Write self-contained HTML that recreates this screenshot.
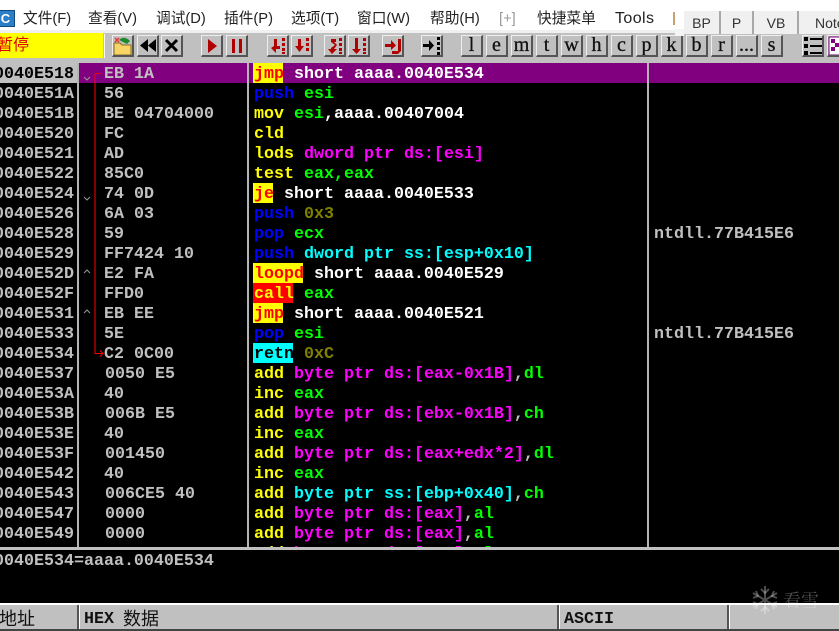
<!DOCTYPE html>
<html><head><meta charset="utf-8"><style>
*{margin:0;padding:0;box-sizing:border-box}
html,body{width:839px;height:631px;overflow:hidden;background:#fff}
#w{position:relative;width:839px;height:631px;overflow:hidden;background:#fff;font-family:"Liberation Sans","Noto Sans CJK SC",sans-serif}
.m{position:absolute;top:9px;font-size:14.7px;line-height:20px;color:#222;white-space:pre}
.tb{position:absolute;left:0;top:30px;width:839px;height:33px;background:#c0c0c0;border-top:3px solid #f0f0f0}
.btn{position:absolute;top:35px;width:22px;height:22px;background:#c0c0c0;border-top:1px solid #eee;border-left:1px solid #eee;border-right:2px solid #555;border-bottom:2px solid #555;font-family:"Liberation Serif",serif;font-size:20px;line-height:19px;text-align:center;color:#111;-webkit-text-stroke:.3px #111;overflow:hidden}
.btn svg{position:absolute;left:0;top:0}
#g{position:absolute;left:0;top:63px;width:839px;height:484px;background:#000;overflow:hidden;font-family:"Liberation Mono",monospace;font-weight:bold;font-size:16.67px;line-height:20px}
.col{position:absolute;top:2px;white-space:normal}
.col div{height:20px;white-space:pre}
.y{color:#ff0}.l{color:#0f0}.w{color:#fff}.u{color:#00f}.o{color:#808000}.p{color:#f0f}.c{color:#0ff}.s{color:#c0c0c0}
.hb{position:absolute;height:20px;left:253px}
.v{position:absolute;background:#b4b4b4;width:2px;top:63px;height:484px}
.f{font-family:"Liberation Mono",monospace;font-weight:bold;font-size:16.67px;line-height:20px;white-space:pre;position:absolute}
.tab{position:absolute;top:11px;height:23px;background:#f0f0f0;border-right:2px solid #a8a8a8;font-size:14px;line-height:24px;text-align:center;color:#333;overflow:hidden;white-space:pre}
</style></head><body><div id="w">
<div style="position:absolute;left:-4px;top:10px;width:19px;height:17px;background:#2a7fc8;border:1px solid #124a80;color:#fff;font:bold 13px/15px 'Liberation Sans';text-align:center">C</div>
<div class="m" style="left:23px">文件(F)</div><div class="m" style="left:88px">查看(V)</div><div class="m" style="left:156px">调试(D)</div><div class="m" style="left:224px">插件(P)</div><div class="m" style="left:291px">选项(T)</div><div class="m" style="left:357px">窗口(W)</div><div class="m" style="left:430px">帮助(H)</div><div class="m" style="left:499px;color:#999">[+]</div><div class="m" style="left:537px">快捷菜单</div><div class="m" style="left:615px;font-size:16px;letter-spacing:.4px">Tools</div>
<div style="position:absolute;left:673px;top:12px;width:2px;height:13px;background:#c9a070"></div>

<div class="tb"></div>
<div style="position:absolute;left:0;top:33px;width:103px;height:25px;background:#ff0;color:#e00000;font-size:16px;line-height:26px;white-space:pre;overflow:hidden"><span style="margin-left:-3px;display:inline-block">暂停</span></div>
<div style="position:absolute;left:104px;top:34px;width:1px;height:24px;background:#fff"></div>

<div class="btn" style="left:112px"><svg width="20" height="20"><path d="M1 7h6l2 2h9v10H1z" fill="#f5d565" stroke="#8a6a20"/><path d="M2 2l4 4M6 2L2 6" stroke="#e33" stroke-width="1.500"/><path d="M6 4q5-5 11 1l-3 3-4-2z" fill="#1a8a2a"/></svg></div>
<div class="btn" style="left:137px"><svg width="20" height="20"><path d="M10 3v13L2 9.500zM18 3v13L10 9.500z" fill="#000"/></svg></div>
<div class="btn" style="left:161px"><svg width="20" height="20"><path d="M4 4l11 11M15 4L4 15" stroke="#000" stroke-width="3"/></svg></div>
<div class="btn" style="left:201px"><svg width="20" height="20"><path d="M6 3v14l9-7z" fill="#b00000"/></svg></div>
<div class="btn" style="left:226px"><svg width="20" height="20"><path d="M5 3h3v14H5zM12 3h3v14h-3z" fill="#b00000"/></svg></div>
<div class="btn" style="left:267px"><svg width="20" height="20"><path d="M6 3h3v7h3v3H8v4l-5-5 3-2z" fill="#b00000"/><path d="M14 2h3v3h-3zM14 7h3v3h-3zM14 12h3v3h-3zM14 16h3v2h-3z" fill="#b00000"/></svg></div>
<div class="btn" style="left:291px"><svg width="20" height="20"><path d="M6 3h3v7h3l-4.500 6L3 10h3z" fill="#b00000"/><path d="M14 2h3v3h-3zM14 7h3v3h-3zM14 12h3v3h-3z" fill="#b00000"/></svg></div>
<div class="btn" style="left:324px"><svg width="20" height="20"><path d="M11 3H6v3l4 3-4 3v1H3l4 5 5-5H9l3-4-3-3h2z" fill="#b00000"/><path d="M14 2h3v3h-3zM14 7h3v3h-3zM14 12h3v3h-3zM14 16h3v2h-3z" fill="#b00000"/></svg></div>
<div class="btn" style="left:348px"><svg width="20" height="20"><path d="M6 2h3v11h3l-4.500 5L3 13h3z" fill="#b00000"/><path d="M14 2h3v3h-3zM14 7h3v3h-3zM14 12h3v3h-3zM14 16h3v2h-3z" fill="#b00000"/></svg></div>
<div class="btn" style="left:382px"><svg width="20" height="20"><path d="M2 8h6V4l5 5.500L8 14v-3H2z" fill="#b00000"/><path d="M15 3h3v12l-3 3H9v-3h6z" fill="#b00000"/></svg></div>
<div class="btn" style="left:421px"><svg width="20" height="20"><path d="M1 8h6V4l5 5.500L7 15v-4H1z" fill="#000"/><path d="M15 1h3v3h-3zM15 6h3v3h-3zM15 11h3v3h-3zM15 16h3v3h-3z" fill="#000"/></svg></div>

<div class="btn" style="left:461px">l</div><div class="btn" style="left:486px">e</div><div class="btn" style="left:511px">m</div><div class="btn" style="left:536px">t</div><div class="btn" style="left:561px">w</div><div class="btn" style="left:586px">h</div><div class="btn" style="left:611px">c</div><div class="btn" style="left:636px">p</div><div class="btn" style="left:661px">k</div><div class="btn" style="left:686px">b</div><div class="btn" style="left:711px">r</div><div class="btn" style="left:736px">...</div><div class="btn" style="left:761px">s</div>
<div class="btn" style="left:802px"><svg width="20" height="20"><path d="M1 1h4v4H1zM7 2h12v2H7zM1 8h4v4H1zM7 9h12v2H7zM1 15h4v4H1zM7 16h12v2H7z" fill="#000"/></svg></div>
<div class="btn" style="left:827px"><svg width="20" height="20"><rect x="1" y="1" width="18" height="18" fill="#fff" stroke="#800080"/><path d="M3 3h4v4H3zM11 3h4v4h-4zM7 7h4v4H7zM3 11h4v4H3zM11 11h4v4h-4z" fill="#800080"/></svg></div>

<div style="position:absolute;left:675px;top:29px;width:9px;height:7px;background:#f4f4f4"></div>
<div style="position:absolute;left:684px;top:11px;width:155px;height:23px;background:#f0f0f0"></div>
<div class="tab" style="left:684px;width:37px">BP</div><div class="tab" style="left:721px;width:33px;">P</div><div class="tab" style="left:755px;width:44px">VB</div><div class="tab" style="left:799px;width:50px;text-align:left;padding-left:16px;border:0">Note</div>

<div id="g">
<div style="position:absolute;left:0;top:0;width:78px;height:20px;background:#c0c0c0"></div>
<div style="position:absolute;left:78px;top:0;width:761px;height:20px;background:#800080"></div>
<div class="hb" style="top:0;width:30px;background:#ff0"></div>
<div class="hb" style="top:120px;width:20px;background:#ff0"></div>
<div class="hb" style="top:200px;width:50px;background:#ff0"></div>
<div class="hb" style="top:220px;width:40px;background:#f00"></div>
<div class="hb" style="top:240px;width:30px;background:#ff0"></div>
<div class="hb" style="top:280px;width:40px;background:#0ff"></div>
<div class="col s" style="left:-6px"><div style="color:#000">0040E518</div><div>0040E51A</div><div>0040E51B</div><div>0040E520</div><div>0040E521</div><div>0040E522</div><div>0040E524</div><div>0040E526</div><div>0040E528</div><div>0040E529</div><div>0040E52D</div><div>0040E52F</div><div>0040E531</div><div>0040E533</div><div>0040E534</div><div>0040E537</div><div>0040E53A</div><div>0040E53B</div><div>0040E53E</div><div>0040E53F</div><div>0040E542</div><div>0040E543</div><div>0040E547</div><div>0040E549</div><div>0040E54B</div></div>
<div class="col s" style="left:104px"><div>EB 1A</div><div>56</div><div>BE 04704000</div><div>FC</div><div>AD</div><div>85C0</div><div>74 0D</div><div>6A 03</div><div>59</div><div>FF7424 10</div><div>E2 FA</div><div>FFD0</div><div>EB EE</div><div>5E</div><div>C2 0C00</div><div style="margin-left:1px">0050 E5</div><div>40</div><div style="margin-left:1px">006B E5</div><div>40</div><div style="margin-left:1px">001450</div><div>40</div><div style="margin-left:1px">006CE5 40</div><div style="margin-left:1px">0000</div><div style="margin-left:1px">0000</div><div style="margin-left:1px">0000</div></div>
<div class="col" style="left:254px">
<div><span style="color:#f00">jmp</span><span class="w"> short aaaa.0040E534</span></div>
<div><span class="u">push</span> <span class="l">esi</span></div>
<div><span class="y">mov</span> <span class="l">esi</span><span class="w">,aaaa.00407004</span></div>
<div><span class="y">cld</span></div>
<div><span class="y">lods</span> <span class="p">dword ptr ds:[esi]</span></div>
<div><span class="y">test</span> <span class="l">eax,eax</span></div>
<div><span style="color:#f00">je</span><span class="w"> short aaaa.0040E533</span></div>
<div><span class="u">push</span> <span class="o">0x3</span></div>
<div><span class="u">pop</span> <span class="l">ecx</span></div>
<div><span class="u">push</span> <span class="c">dword ptr ss:[esp+0x10]</span></div>
<div><span style="color:#f00">loopd</span><span class="w"> short aaaa.0040E529</span></div>
<div><span class="y">call</span> <span class="l">eax</span></div>
<div><span style="color:#f00">jmp</span><span class="w"> short aaaa.0040E521</span></div>
<div><span class="u">pop</span> <span class="l">esi</span></div>
<div><span style="color:#000">retn</span> <span class="o">0xC</span></div>
<div><span class="y">add</span> <span class="p">byte ptr ds:[eax-0x1B]</span><span class="s">,</span><span class="l">dl</span></div>
<div><span class="y">inc</span> <span class="l">eax</span></div>
<div><span class="y">add</span> <span class="p">byte ptr ds:[ebx-0x1B]</span><span class="s">,</span><span class="l">ch</span></div>
<div><span class="y">inc</span> <span class="l">eax</span></div>
<div><span class="y">add</span> <span class="p">byte ptr ds:[eax+edx*2]</span><span class="s">,</span><span class="l">dl</span></div>
<div><span class="y">inc</span> <span class="l">eax</span></div>
<div><span class="y">add</span> <span class="c">byte ptr ss:[ebp+0x40]</span><span class="s">,</span><span class="l">ch</span></div>
<div><span class="y">add</span> <span class="p">byte ptr ds:[eax]</span><span class="s">,</span><span class="l">al</span></div>
<div><span class="y">add</span> <span class="p">byte ptr ds:[eax]</span><span class="s">,</span><span class="l">al</span></div>
<div><span class="y">add</span> <span class="p">byte ptr ds:[eax]</span><span class="s">,</span><span class="l">al</span></div>
</div>
<div class="f s" style="left:654px;top:162px">ntdll.77B415E6</div>
<div class="f s" style="left:654px;top:262px">ntdll.77B415E6</div>
</div>
<div class="v" style="left:77px"></div><div class="v" style="left:247px"></div><div class="v" style="left:647px"></div>
<svg style="position:absolute;left:78px;top:63px" width="30" height="300"><path d="M22.500 10.500H18Q17 10.500 17 12V290.500H25" fill="none" stroke="#f00" stroke-width="1"/><path d="M22 287.500l3 3-3 3" fill="none" stroke="#f00"/><g fill="none" stroke="#999" stroke-width="1"><path d="M6 14l3 3 3-3M6 134l3 3 3-3"/><path d="M6 210l3-3 3 3M6 250l3-3 3 3"/></g></svg>

<div style="position:absolute;left:0;top:547px;width:839px;height:3px;background:#c0c0c0"></div>
<div style="position:absolute;left:0;top:550px;width:839px;height:53px;background:#000"></div>
<div class="f s" style="left:-6px;top:552px">0040E534=aaaa.0040E534</div>

<div style="position:absolute;left:0;top:603px;width:839px;height:28px;background:#c0c0c0;border-top:2px solid #fff;border-bottom:2px solid #444"></div>
<div style="position:absolute;left:77px;top:605px;width:3px;height:24px;background:#555;border-right:1px solid #fff"></div>
<div style="position:absolute;left:557px;top:605px;width:3px;height:24px;background:#555;border-right:1px solid #fff"></div>
<div style="position:absolute;left:727px;top:605px;width:3px;height:24px;background:#555;border-right:1px solid #fff"></div>
<div style="position:absolute;left:-1px;top:606px;font-size:18px;line-height:26px;color:#111">地址</div>
<div class="f" style="left:84px;top:610px;color:#111">HEX</div>
<div style="position:absolute;left:123px;top:606px;font-size:18px;line-height:26px;color:#111">数据</div>
<div class="f" style="left:564px;top:610px;color:#111">ASCII</div>

<svg style="position:absolute;left:750px;top:584px" width="30" height="32"><g stroke="#fff" stroke-opacity=".3" stroke-width="2" fill="none"><path d="M15 2v28M3 9l24 14M27 9L3 23"/><path d="M11 5l4 4 4-4M11 27l4-4 4 4M3 14l5-2-2-5M27 14l-5-2 2-5M3 18l5 2-2 5M27 18l-5 2 2 5"/></g></svg>
<div style="position:absolute;left:783px;top:589px;font-family:'Noto Serif CJK SC',serif;font-size:18px;line-height:22px;color:rgba(255,255,255,.3)">看雪</div>
</div></body></html>
